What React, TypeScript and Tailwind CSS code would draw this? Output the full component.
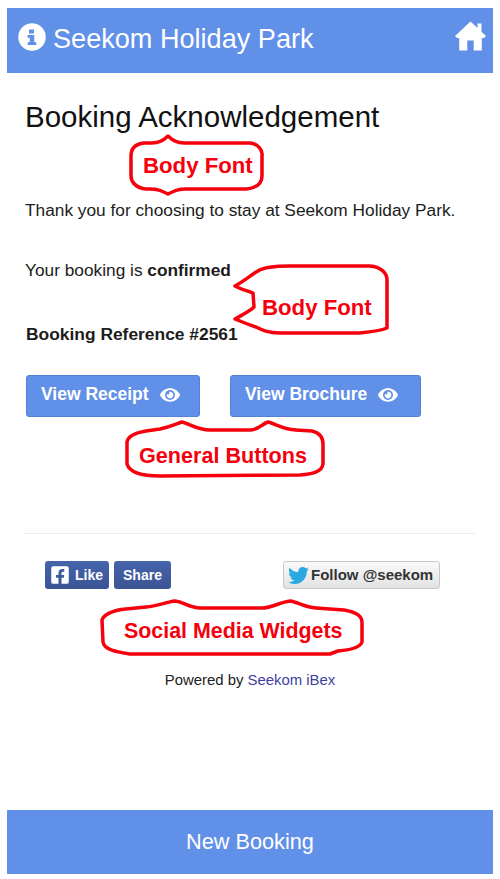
import React from "react";
import { FaEye, FaFacebookSquare, FaTwitter } from "react-icons/fa";

function Callout({ d, text, textBox }: { d: string; text: string; textBox: string }) {
  return (
    <>
      <svg className="absolute left-0 top-0 pointer-events-none" viewBox="0 0 500 879" width="500" height="879" fill="none">
        <path d={d} stroke="#f5000c" strokeWidth="3.5" strokeLinejoin="round" fill="#fff" />
      </svg>
      <div className={"absolute text-[#f5000c] font-bold whitespace-nowrap " + textBox}>{text}</div>
    </>
  );
}

function InfoIcon() {
  return (
    <svg width="28" height="28" viewBox="0 0 28 28" className="shrink-0 mb-[3px]">
      <circle cx="14" cy="14" r="13.75" fill="#fff" />
      <path
        d="M11 6.5 h5 v4 h-5 z M9.5 12 h6.8 v7.2 h2 v2.8 h-8.6 v-2.8 h2 v-4.4 h-2.2 z"
        fill="#6190e8"
      />
    </svg>
  );
}

function HomeIcon() {
  return (
    <svg width="31" height="30" viewBox="0 0 31 30" className="shrink-0 mb-[10px]">
      <path
        d="M15.5 0.5 L22.5 7 V2.5 H26.5 V10.8 L31 15 L29 17 H26.8 V29.5 H18.7 V19.5 H12.3 V29.5 H4.2 V17 H2 L0 15 Z"
        fill="#fff"
      />
    </svg>
  );
}

const buttonClass =
  "h-[42px] rounded-[3px] bg-[#6190e8] border border-[#5580d4] text-white font-bold text-[17.5px] flex items-center pl-[14px] pb-[3px] gap-[11px]";

export default function App() {
  return (
    <div className="relative w-[500px] h-[879px] bg-white overflow-hidden flex flex-col px-[7px] pt-[8px] pb-[5px] font-['Liberation_Sans',Arial,sans-serif] text-[#1c1c1c]">
      <header className="h-[65px] bg-[#6190e8] flex items-center justify-between pl-[11px] pr-[7px] text-white shrink-0">
        <div className="flex items-center gap-[7px] mb-[4px]">
          <InfoIcon />
          <span className="text-[27.1px] leading-none">Seekom Holiday Park</span>
        </div>
        <HomeIcon />
      </header>

      <main className="flex-1 flex flex-col px-[18px]">
        <h1 className="mt-[27px] text-[29.5px] leading-[34px] text-[#111]">Booking Acknowledgement</h1>
        <p className="mt-[66px] text-[17.3px] leading-[20px]">Thank you for choosing to stay at Seekom Holiday Park.</p>
        <p className="mt-[40px] text-[17.3px] leading-[20px]">Your booking is <b>confirmed</b></p>
        <p className="mt-[44px] text-[17.4px] leading-[20px] font-bold pl-[1px]">Booking Reference #2561</p>
        <div className="mt-[31px] flex gap-[30px] pl-[1px]">
          <button className={buttonClass + " w-[174px]"}>
            View Receipt <FaEye className="w-[20px] h-[20px]" />
          </button>
          <button className={buttonClass + " w-[191px]"}>
            View Brochure <FaEye className="w-[20px] h-[20px]" />
          </button>
        </div>
        <hr className="mt-[116px] border-0 border-t border-[#ececec] w-[450px]" />
        <div className="mt-[27px] flex items-center pl-[20px]">
          <div className="w-[64px] h-[28px] rounded-[3px] bg-linear-to-b from-[#4664ab] to-[#3a5594] text-white font-bold text-[14px] flex items-center pl-[5px] gap-[5px]">
            <FaFacebookSquare className="w-[20px] h-[20px]" /> Like
          </div>
          <div className="ml-[5px] w-[57px] h-[28px] rounded-[3px] bg-linear-to-b from-[#4664ab] to-[#3a5594] text-white font-bold text-[14px] flex items-center justify-center">
            Share
          </div>
          <div className="ml-[112px] w-[157px] h-[28px] rounded-[3px] border border-[#c8c8c8] bg-linear-to-b from-[#fafafa] to-[#e2e2e2] text-[#333] font-bold text-[15px] flex items-center pl-[4px] gap-[2px]">
            <FaTwitter className="w-[21px] h-[21px] text-[#2aa9e0] shrink-0" /> Follow @seekom
          </div>
        </div>
        <p className="mt-[82px] text-[14.9px] leading-[18px] text-center w-[450px] text-[#222]">
          Powered by <span className="text-[#3f3f9f]">Seekom iBex</span>
        </p>
      </main>

      <footer className="h-[64px] bg-[#6190e8] text-white text-[21.7px] flex items-center justify-center shrink-0">New Booking</footer>

      <Callout
        d="M168 136 C172 140 176 143 184 143 L250 143 C258 144 263 150 262 156 L262 176 C262 184 256 188 246 189 L186 189 C178 189 174 191 168 194 C162 191 158 189 150 189 L146 189 C136 188 131 182 131 176 L131 156 C131 149 135 144 144 143 L152 143 C160 143 164 140 168 136 Z"
        text="Body Font"
        textBox="left-[143px] top-[153px] text-[22.2px] leading-[26px]"
      />
      <Callout
        d="M235 286 C246 280 252 274 258 271 C264 267 274 266 290 266 L370 266 C380 267 387 272 387 280 L387 328 C380 331 370 332 360 333 L280 333 C268 333 262 330 256 327 C250 325 242 322 235 319 C242 315 250 311 254 307 L253 293 C248 291 240 289 235 286 Z"
        text="Body Font"
        textBox="left-[262px] top-[295px] text-[22.2px] leading-[26px]"
      />
      <Callout
        d="M182 422 C190 424 198 430 210 430 L250 430 C258 430 262 424 268 422 C276 424 282 429 296 430 L312 431 C320 433 323 438 323 444 L323 464 C322 472 312 474 300 475 L160 476 C146 476 130 474 127 464 L127 442 C128 436 134 433 146 431 L160 429 C170 427 176 424 182 422 Z"
        text="General Buttons"
        textBox="left-[139px] top-[443px] text-[21.6px] leading-[26px]"
      />
      <Callout
        d="M175 601 C184 602 190 608 200 608 L262 608 C272 608 280 602 290 601 C298 602 304 607 316 608 L344 610 C356 612 362 616 362 622 L362 642 C360 648 350 650 338 651 L330 654 L130 654 C118 652 104 650 103 642 L102 620 C104 614 114 610 126 609 L146 607 C158 606 166 602 175 601 Z"
        text="Social Media Widgets"
        textBox="left-[124px] top-[618px] text-[21.4px] leading-[26px]"
      />
    </div>
  );
}
